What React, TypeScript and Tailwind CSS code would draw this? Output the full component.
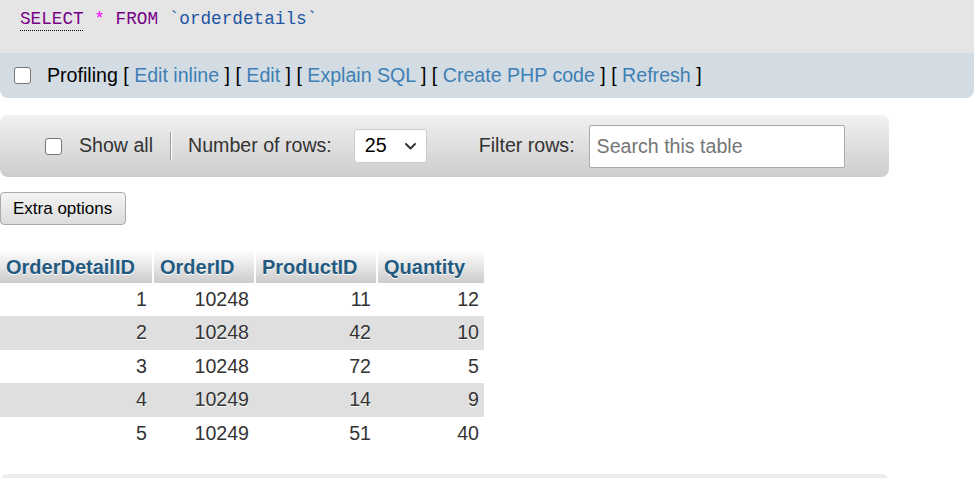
import React from "react";

const rows = [
  [1, 10248, 11, 12],
  [2, 10248, 42, 10],
  [3, 10248, 72, 5],
  [4, 10249, 14, 9],
  [5, 10249, 51, 40],
];

function Checkbox() {
  return <span className="inline-block h-[17px] w-[17px] shrink-0 rounded-[3px] border border-[#767676] bg-white" />;
}

function Link({ children }: { children: React.ReactNode }) {
  return <a className="cursor-pointer text-[#3d7fb5]">{children}</a>;
}

export default function App() {
  return (
    <div className="h-screen overflow-hidden bg-white font-['Liberation_Sans',Arial,sans-serif] text-[19.6px] text-black">
      {/* SQL query */}
      <div className="h-[53px] bg-[#e5e5e5] px-[20px] pt-[6px] font-['Liberation_Mono',monospace] text-[17.7px] leading-[26px]">
        <span className="text-[#770088] underline decoration-dotted decoration-black decoration-1 underline-offset-[6px]">
          SELECT
        </span>{" "}
        <span className="text-[#ff00ff]">*</span>{" "}
        <span className="text-[#770088]">FROM</span>{" "}
        <span className="text-[#1f55a3]">`orderdetails`</span>
      </div>

      {/* Profiling bar */}
      <div className="flex h-[45px] items-center rounded-b-[8px] bg-[#d3dce3] pl-[14px]">
        <Checkbox />
        <span className="ml-[16px] whitespace-pre">
          Profiling [ <Link>Edit inline</Link> ] [ <Link>Edit</Link> ] [ <Link>Explain SQL</Link> ] [{" "}
          <Link>Create PHP code</Link> ] [ <Link>Refresh</Link> ]
        </span>
      </div>

      {/* Navigation */}
      <div className="mt-[17px] flex h-[62px] w-[889px] items-center rounded-[8px] bg-gradient-to-b from-[#f1f1f1] to-[#cdcdcd] pl-[45px] text-[#333]">
        <Checkbox />
        <span className="ml-[17px]">Show all</span>
        <span className="ml-[17px] h-[28px] w-[2px] border-l border-[#999] bg-white" />
        <span className="ml-[16px]">Number of rows:</span>
        <div className="ml-[22px] flex h-[34px] w-[73px] items-center justify-between rounded-[3px] border border-[#ccc] bg-white pl-[10px] pr-[9px] text-black">
          <span>25</span>
          <svg width="13" height="9" viewBox="0 0 13 9" fill="none" stroke="#333" strokeWidth="2" strokeLinecap="round" strokeLinejoin="round">
            <path d="M2 2l4.5 4.5L11 2" />
          </svg>
        </div>
        <span className="ml-[52px]">Filter rows:</span>
        <input
          className="ml-[14px] h-[43px] w-[256px] rounded-[2px] border border-[#aaa] bg-white px-[7px] text-[19.6px] text-black outline-none placeholder:text-[#757575]"
          placeholder="Search this table"
        />
      </div>

      {/* Extra options */}
      <button className="mt-[15px] h-[33px] w-[126px] rounded-[4px] border border-[#aaa] bg-gradient-to-b from-[#f4f4f4] to-[#dcdcdc] pl-[12px] text-left text-[17px] text-black">
        Extra options
      </button>

      {/* Results table */}
      <table className="mt-[25px] w-[484px] table-fixed border-separate border-spacing-0">
        <colgroup>
          <col className="w-[154px]" />
          <col className="w-[102px]" />
          <col className="w-[122px]" />
          <col className="w-[106px]" />
        </colgroup>
        <thead>
          <tr className="h-[33px] bg-gradient-to-b from-white to-[#cccccc]">
            {["OrderDetailID", "OrderID", "ProductID", "Quantity"].map((h, i) => (
              <th
                key={h}
                className={`pl-[6px] text-left text-[20px] font-bold text-[#235a81] [text-shadow:0_1px_0_#fff] ${i < 3 ? "border-r-2 border-white" : ""}`}
              >
                {h}
              </th>
            ))}
          </tr>
        </thead>
        <tbody>
          {rows.map((r, ri) => (
            <tr key={ri} className={`h-[33.4px] ${ri % 2 === 1 ? "bg-[#dfdfdf]" : "bg-white"}`}>
              {r.map((v, ci) => (
                <td
                  key={ci}
                  className={`text-right text-[#333] [text-shadow:0_1px_0_#fff] ${ci < 3 ? "pr-[7px]" : "pr-[5px]"}`}
                >
                  {v}
                </td>
              ))}
            </tr>
          ))}
        </tbody>
      </table>

      {/* Bottom navigation (cut off) */}
      <div className="mt-[24px] h-[62px] w-[889px] rounded-[8px] bg-gradient-to-b from-[#ededed] to-[#cdcdcd]" />
    </div>
  );
}
